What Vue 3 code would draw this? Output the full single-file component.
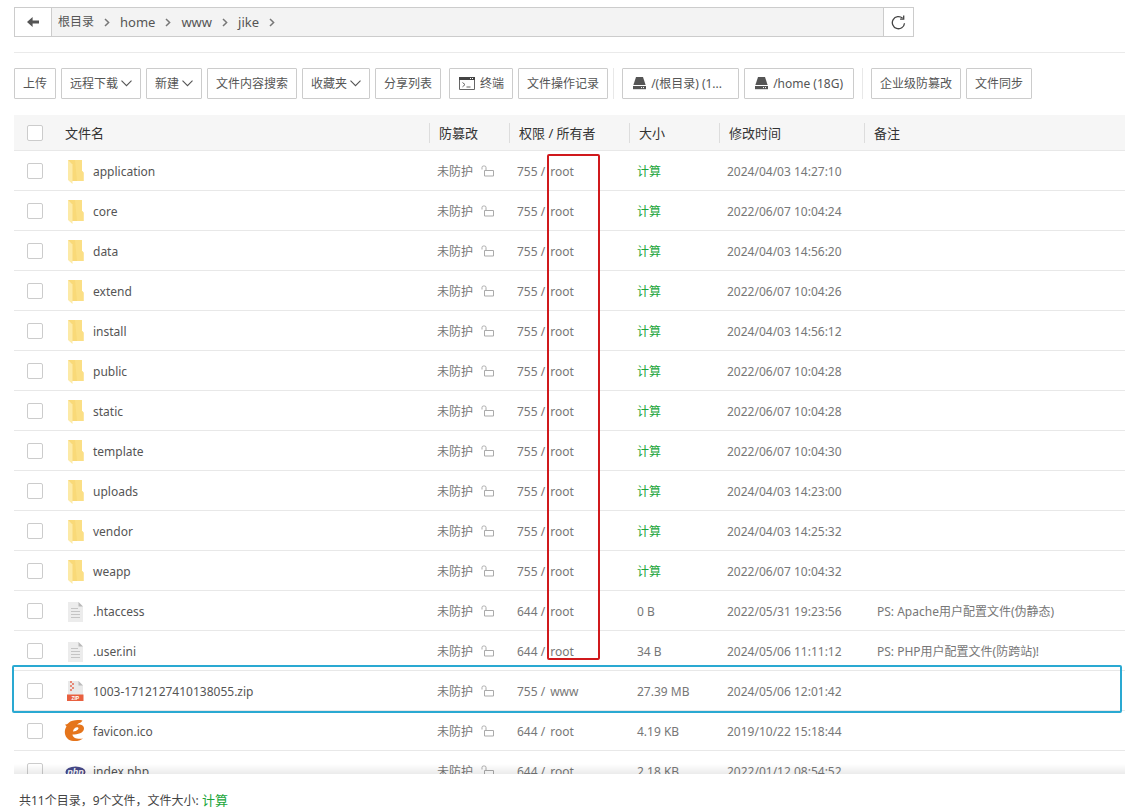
<script setup>
import { reactive, ref } from 'vue'

const crumbs = ['根目录', 'home', 'www', 'jike']

const actions = [
  { text: '上传' },
  { text: '远程下载', menu: true },
  { text: '新建', menu: true },
  { text: '文件内容搜索' },
  { text: '收藏夹', menu: true },
  { text: '分享列表' },
]
const disks = ['/(根目录) (1...', '/home (18G)']
const extras = ['企业级防篡改', '文件同步']

const row = (name, icon, mode, owner, size, time, note = '') =>
  ({ name, icon, mode, owner, size, time, note, checked: false })

const files = reactive([
  row('application', 'folder', '755', 'root', '', '2024/04/03 14:27:10'),
  row('core', 'folder', '755', 'root', '', '2022/06/07 10:04:24'),
  row('data', 'folder', '755', 'root', '', '2024/04/03 14:56:20'),
  row('extend', 'folder', '755', 'root', '', '2022/06/07 10:04:26'),
  row('install', 'folder', '755', 'root', '', '2024/04/03 14:56:12'),
  row('public', 'folder', '755', 'root', '', '2022/06/07 10:04:28'),
  row('static', 'folder', '755', 'root', '', '2022/06/07 10:04:28'),
  row('template', 'folder', '755', 'root', '', '2022/06/07 10:04:30'),
  row('uploads', 'folder', '755', 'root', '', '2024/04/03 14:23:00'),
  row('vendor', 'folder', '755', 'root', '', '2024/04/03 14:25:32'),
  row('weapp', 'folder', '755', 'root', '', '2022/06/07 10:04:32'),
  row('.htaccess', 'text', '644', 'root', '0 B', '2022/05/31 19:23:56', 'PS: Apache用户配置文件(伪静态)'),
  row('.user.ini', 'text', '644', 'root', '34 B', '2024/05/06 11:11:12', 'PS: PHP用户配置文件(防跨站)!'),
  row('1003-1712127410138055.zip', 'zip', '755', 'www', '27.39 MB', '2024/05/06 12:01:42'),
  row('favicon.ico', 'ico', '644', 'root', '4.19 KB', '2019/10/22 15:18:44'),
  row('index.php', 'php', '644', 'root', '2.18 KB', '2022/01/12 08:54:52'),
])

const all = ref(false)
const toggleAll = () => files.forEach((f) => { f.checked = all.value })
</script>

<template>
  <main class="page">
    <nav class="path" aria-label="路径">
      <button class="square back" type="button" aria-label="返回">
        <svg width="12" height="10" viewBox="0 0 12 10"><path d="M5.6 0L0 5l5.6 5V6.4H12V3.6H5.6z" fill="#555" /></svg>
      </button>
      <div class="crumbs">
        <template v-for="c in crumbs" :key="c">
          <a href="#" :class="{ latin: c !== '根目录' }">{{ c }}</a>
          <svg width="6" height="9" viewBox="0 0 6 9"><path d="M1 1l3.6 3.5L1 8" fill="none" stroke="#777" stroke-width="1.5" /></svg>
        </template>
      </div>
      <button class="square refresh" type="button" aria-label="刷新">
        <svg width="15" height="15" viewBox="0 0 15 15" fill="none" stroke="#444" stroke-width="1.3">
          <path d="M13.5 8.2a6.1 6.1 0 1 1-1.9-5" /><path d="M12.7 0.6v3.6H9.1" />
        </svg>
      </button>
    </nav>

    <div class="toolbar">
      <div class="group">
        <button v-for="a in actions" :key="a.text" class="btn" type="button">
          {{ a.text }}<svg v-if="a.menu" class="caret" width="11" height="7" viewBox="0 0 11 7"><path d="M0.5 0.7L5.500 5.700l5-5" fill="none" stroke="#555" stroke-width="1.1" /></svg>
        </button>
      </div>
      <div class="group tools">
        <button class="btn" type="button">
          <svg class="term" width="16" height="13" viewBox="0 0 16 13">
            <path d="M.5.5h15v12H.5z" fill="#fff" stroke="#666" /><path d="M0 0h16v3H0z" fill="#444" />
            <path d="M11 1.5h1M13 1.5h1" stroke="#fff" />
            <path d="M3.5 5.5L6 7.6 3.5 9.8M7.5 10h4" fill="none" stroke="#666" />
          </svg>终端
        </button>
        <button class="btn" type="button">文件操作记录</button>
      </div>
      <div class="group disks">
        <button v-for="d in disks" :key="d" class="btn disk" type="button">
          <svg width="13" height="13" viewBox="0 0 13 13">
            <path d="M3 0h7l2.600 8H.4z" fill="#555" /><path d="M0 9h13v3.200H0z" fill="#555" />
            <path d="M8 10.600h1M10 10.600h1" stroke="#fff" />
          </svg>{{ d }}
        </button>
      </div>
      <div class="group extras">
        <button v-for="e in extras" :key="e" class="btn" type="button">{{ e }}</button>
      </div>
    </div>

    <section class="list">
      <table>
        <colgroup>
          <col class="c-check"><col class="c-name"><col class="c-guard"><col class="c-mode">
          <col class="c-size"><col class="c-time"><col>
        </colgroup>
        <thead>
          <tr>
            <th class="check"><input v-model="all" type="checkbox" aria-label="全选" @change="toggleAll"></th>
            <th><div class="plain">文件名</div></th>
            <th><div>防篡改</div></th>
            <th><div>权限 / 所有者</div></th>
            <th><div>大小</div></th>
            <th><div>修改时间</div></th>
            <th><div>备注</div></th>
          </tr>
        </thead>
        <tbody>
          <tr v-for="(f, i) in files" :key="f.name">
            <td class="check"><input :id="'f' + i" v-model="f.checked" type="checkbox" :aria-label="f.name"></td>
            <td class="name">
              <label :for="'f' + i">
                <svg v-if="f.icon === 'folder'" width="24" height="26" viewBox="0 0 24 26">
                  <path d="M5 1h14v11l1.500 1.500V22H9z" fill="#f9d978" />
                  <path d="M12 1h7v11l1.500 1.500V22H14z" fill="#fbdf85" />
                  <path d="M5 1l4.500 4.500V25L5 21z" fill="#fdeaa6" />
                </svg>
                <svg v-else-if="f.icon === 'text'" width="24" height="26" viewBox="0 0 24 26">
                  <path d="M5 3h10.500L20 7.500V23H5z" fill="#ececec" /><path d="M15.500 3L20 7.500h-4.500z" fill="#b9b9b9" />
                  <path d="M8 9.500h7M8 12.500h9M8 15.500h9M8 18.500h9" stroke="#c4c4c4" />
                </svg>
                <svg v-else-if="f.icon === 'zip'" width="24" height="26" viewBox="0 0 24 26">
                  <path d="M5 2h10.500L20 6.500V16H5z" fill="#e9e9e9" /><path d="M15.500 2L20 6.500h-4.500z" fill="#bbb" />
                  <path d="M7 3h2M9 5h2M7 7h2M9 9h2M7 11h2" stroke="#e66a52" stroke-width="1.500" />
                  <path d="M4 15.500h16.500V22H4z" fill="#e8603f" />
                  <text x="12.300" y="20.800" class="ziptext">ZIP</text>
                </svg>
                <svg v-else-if="f.icon === 'ico'" width="24" height="26" viewBox="0 0 24 26">
                  <path transform="translate(1.500 1)" d="M18 .5C13-.5 7 0 4 3C3 4 1.500 4.500.5 4.500L2 6.500C-.5 10-.5 16 4 19.500C8 22 15 21.500 18.500 18.500C13 19.500 8 18 8 14.500C13 14.500 19.500 13 19.500 8.500C19.500 5 15.500 4 12.500 4.800C14 2.800 16 3.500 18 .5zM8.500 11.500C8.800 8.500 11.500 6.800 13.500 7.500C15 8.300 13 11.300 8.500 11.500z" fill="#e5751c" fill-rule="evenodd" />
                </svg>
                <svg v-else width="24" height="26" viewBox="0 0 24 26">
                  <ellipse cx="12.500" cy="13" rx="10" ry="5.500" fill="#474a8a" />
                  <text x="12.500" y="15.500" class="phptext">php</text>
                </svg>
                <span>{{ f.name }}</span>
              </label>
            </td>
            <td>
              <span class="guard">未防护
                <svg width="13" height="13" viewBox="0 0 13 13" fill="none" stroke="#aaa">
                  <path d="M3.500 5.500h9v5.500h-9zM1 4.500V2.500a1.500 1.500 0 0 1 1.500-1.500h1A1.500 1.500 0 0 1 5 2.500v3" />
                </svg>
              </span>
            </td>
            <td><span class="mode">{{ f.mode }} /</span>{{ f.owner }}</td>
            <td><template v-if="f.size">{{ f.size }}</template><a v-else class="calc" href="#">计算</a></td>
            <td>{{ f.time }}</td>
            <td class="note">{{ f.note }}</td>
          </tr>
        </tbody>
      </table>
    </section>

    <footer>共11个目录，9个文件，文件大小: <a class="calc" href="#">计算</a></footer>

    <div class="mark red"></div>
    <div class="mark blue"></div>
  </main>
</template>

<style>
body { background: #fff; }
</style>

<style scoped>
* { box-sizing: border-box; }
.page {
  position: relative;
  display: flex;
  flex-direction: column;
  height: 100vh;
  padding: 7px 0 0 14px;
  overflow: hidden;
  font: 12px/20px "Noto Sans", "Noto Sans CJK SC", sans-serif;
  color: #666;
}
svg { flex: none; }
a { color: inherit; text-decoration: none; }
button { font: inherit; color: #555; background: #fff; cursor: pointer; }

.path { display: flex; flex: none; width: 80vw; height: 30px; border: 1px solid #ccc; }
.square { display: flex; align-items: center; justify-content: center; padding: 0; border: 0; }
.back { width: 37px; border-right: 1px solid #ccc; }
.refresh { width: 30px; border-left: 1px solid #ccc; }
.crumbs { display: flex; flex: 1; align-items: center; gap: 10px; padding-left: 6px; background: #f3f3f3; color: #555; }
.crumbs .latin { font-size: 13px; }

.toolbar {
  display: flex;
  flex: none;
  margin-top: 15px;
  padding: 15px 0 16px;
  border-top: 1px solid #eaeaea;
}
.group { display: flex; gap: 5px; }
.tools { margin-left: 8px; }
.disks { margin: 0 8px 0 5px; }
.disks, .extras { padding-left: 8px; border-left: 1px solid #e8e8e8; }
.btn {
  display: flex;
  align-items: center;
  height: 31px;
  padding: 0 8px;
  border: 1px solid #ccc;
  border-radius: 1px;
  white-space: nowrap;
}
.caret { margin-left: 3px; }
.term { margin: 0 5px 0 1px; }
.disk { gap: 5px; padding: 0 10px; }
.disk:first-child { min-width: 117px; }

.list { position: relative; flex: 1; min-height: 0; overflow: hidden; }
.list::after {
  content: "";
  position: absolute;
  inset: auto 0 0;
  height: 10px;
  background: linear-gradient(rgba(0, 0, 0, 0), rgba(0, 0, 0, 0.08));
}
table { width: 100%; table-layout: fixed; border-collapse: separate; border-spacing: 0; }
.c-check { width: 41px; }
.c-name { width: 374px; }
.c-guard { width: 80px; }
.c-mode { width: 120px; }
.c-size { width: 90px; }
.c-time { width: 145px; }
th {
  height: 36px;
  padding: 0;
  background: #f6f6f6;
  border-bottom: 1px solid #e8e8e8;
  font-size: 13px;
  font-weight: 400;
  color: #333;
  text-align: left;
}
th div { padding-left: 9px; border-left: 1px solid #ddd; }
th .plain { padding-left: 10px; border-left: 0; }
td { height: 40px; padding: 2px 0 0 8px; border-bottom: 1px solid #e8e8e8; white-space: nowrap; color: #777; }
th.check, td.check { padding: 0 0 0 13px; }
td.note { padding-left: 13px; }
input {
  display: block;
  width: 16px;
  height: 16px;
  margin: 0;
  appearance: none;
  background: #fff;
  border: 1px solid #ccc;
  border-radius: 2px;
}
input:checked { background: #20a53a; border-color: #20a53a; }
.name label { display: flex; align-items: center; gap: 6px; color: #555; }
.guard { display: flex; align-items: center; gap: 8px; }
.mode { margin-right: 5px; }
.calc { color: #20a53a; }
.ziptext { font: bold 5px "Liberation Sans", sans-serif; fill: #fff; text-anchor: middle; }
.phptext { font: italic bold 9px "Liberation Sans", sans-serif; fill: #fff; text-anchor: middle; }

footer { flex: none; height: 34px; padding: 16px 0 0 5px; color: #444; }
footer .calc { font-size: 13px; }

.mark { position: absolute; border: 2px solid; border-radius: 2px; pointer-events: none; }
.red { left: 547px; top: 154px; width: 53px; height: 506px; border-color: #d0191c; }
.blue { left: 12px; right: 3px; top: 665px; height: 48px; border-color: #2aa9d2; }
</style>
